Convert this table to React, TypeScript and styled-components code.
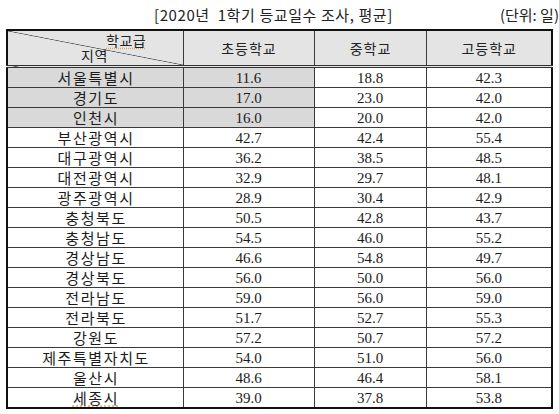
import React from "react";
import styled, { createGlobalStyle } from "styled-components";

const Global = createGlobalStyle`
  html, body { margin: 0; padding: 0; background: #fff; }
  body { font-family: "Noto Sans CJK KR", "Noto Sans", sans-serif; color: #1c1c1c; }
`;

const Page = styled.div`
  width: 559px;
  height: 414px;
  padding: 5px 0 0 6px;
  box-sizing: border-box;
  overflow: hidden;
`;

const Caption = styled.div`
  display: flex;
  align-items: baseline;
  width: 553px;
  height: 24px;
  font-size: 15px;
  line-height: 20px;
  color: #222;
`;

const Title = styled.span`
  margin-left: 148px;
  white-space: pre;
  letter-spacing: 0.6px;
`;

const Unit = styled.span`
  margin-left: auto;
  white-space: pre;
`;

const Table = styled.table`
  border-collapse: collapse;
  table-layout: fixed;
  width: 547px;
  border: 2px solid #111;
`;

const HeadCell = styled.th`
  height: 34px;
  padding: 0 0 0 1px;
  background: #e4e4e4;
  border: 1px solid #3a3a3a;
  border-bottom: 3px double #333;
  font-weight: 400;
  font-size: 14px;
  letter-spacing: 1px;
  color: #222;
  text-align: center;
  vertical-align: middle;
`;

const CornerCell = styled(HeadCell)`
  padding: 0;
  letter-spacing: 0.5px;
  background:
    linear-gradient(
      to top right,
      transparent calc(50% - 0.7px),
      #555 50%,
      transparent calc(50% + 0.7px)
    ),
    #e4e4e4;
`;

const CornerStack = styled.div`
  display: flex;
  flex-direction: column;
  align-items: flex-start;
  line-height: 15px;
  font-size: 14px;
`;

const CornerLabel = styled.span<{ $indent: number; $marked?: boolean }>`
  margin-left: ${(p) => p.$indent}px;
  text-decoration: ${(p) => (p.$marked ? "underline" : "none")};
  text-decoration-color: #e2a86a;
  text-decoration-style: dotted;
  text-underline-offset: 2px;
`;

const Cell = styled.td<{ $shade?: boolean; $num?: boolean }>`
  height: 19px;
  padding: 0 0 0 ${(p) => (p.$num ? 0 : 1.6)}px;
  border: 1px solid #3a3a3a;
  background: ${(p) => (p.$shade ? "#d9d9d9" : "#fff")};
  text-align: center;
  vertical-align: middle;
  font-family: ${(p) =>
    p.$num
      ? '"Liberation Serif", "DejaVu Serif", serif'
      : '"Noto Sans CJK KR", sans-serif'};
  font-size: 15px;
  letter-spacing: ${(p) => (p.$num ? 0 : 1.6)}px;
  line-height: 18px;
  color: #1c1c1c;
  white-space: nowrap;
  overflow: hidden;
`;

const Marked = styled.span`
  text-decoration: underline dotted #e2a86a;
  text-underline-offset: 2px;
`;

type Row = { region: string; values: [string, string, string]; shade?: boolean; marked?: boolean };

const rows: Row[] = [
  { region: "서울특별시", values: ["11.6", "18.8", "42.3"], shade: true },
  { region: "경기도", values: ["17.0", "23.0", "42.0"], shade: true },
  { region: "인천시", values: ["16.0", "20.0", "42.0"], shade: true },
  { region: "부산광역시", values: ["42.7", "42.4", "55.4"] },
  { region: "대구광역시", values: ["36.2", "38.5", "48.5"] },
  { region: "대전광역시", values: ["32.9", "29.7", "48.1"] },
  { region: "광주광역시", values: ["28.9", "30.4", "42.9"] },
  { region: "충청북도", values: ["50.5", "42.8", "43.7"] },
  { region: "충청남도", values: ["54.5", "46.0", "55.2"] },
  { region: "경상남도", values: ["46.6", "54.8", "49.7"] },
  { region: "경상북도", values: ["56.0", "50.0", "56.0"] },
  { region: "전라남도", values: ["59.0", "56.0", "59.0"] },
  { region: "전라북도", values: ["51.7", "52.7", "55.3"] },
  { region: "강원도", values: ["57.2", "50.7", "57.2"] },
  { region: "제주특별자치도", values: ["54.0", "51.0", "56.0"] },
  { region: "울산시", values: ["48.6", "46.4", "58.1"] },
  { region: "세종시", values: ["39.0", "37.8", "53.8"], marked: true },
];

export default function App() {
  return (
    <>
      <Global />
      <Page>
        <Caption>
          <Title>[2020년  1학기 등교일수 조사, 평균]</Title>
          <Unit>(단위: 일)</Unit>
        </Caption>
        <Table>
          <colgroup>
            <col style={{ width: 176 }} />
            <col style={{ width: 131 }} />
            <col style={{ width: 112 }} />
            <col style={{ width: 126 }} />
          </colgroup>
          <thead>
            <tr>
              <CornerCell>
                <CornerStack>
                  <CornerLabel $indent={98} $marked>학교급</CornerLabel>
                  <CornerLabel $indent={73}>지역</CornerLabel>
                </CornerStack>
              </CornerCell>
              <HeadCell>초등학교</HeadCell>
              <HeadCell>중학교</HeadCell>
              <HeadCell>고등학교</HeadCell>
            </tr>
          </thead>
          <tbody>
            {rows.map((r) => (
              <tr key={r.region}>
                <Cell $shade={r.shade}>
                  {r.marked ? <Marked>{r.region}</Marked> : r.region}
                </Cell>
                <Cell $shade={r.shade} $num>{r.values[0]}</Cell>
                <Cell $num>{r.values[1]}</Cell>
                <Cell $num>{r.values[2]}</Cell>
              </tr>
            ))}
          </tbody>
        </Table>
      </Page>
    </>
  );
}
